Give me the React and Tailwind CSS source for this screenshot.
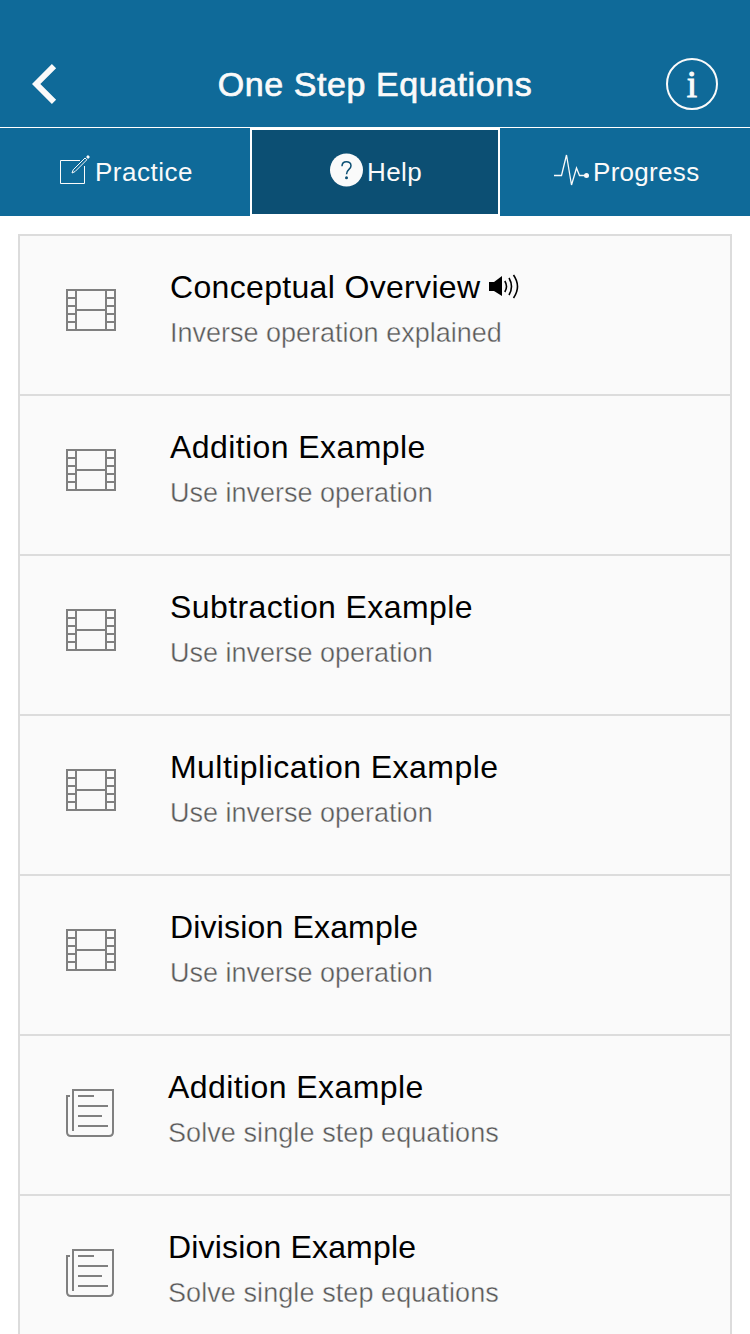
import React from 'react';

function FilmIcon() {
  return (
    <svg className="mt-[53px] ml-[46px] h-[42px] w-[50px] shrink-0" viewBox="0 0 50 42" fill="none" stroke="#808080" strokeWidth="2">
      <path d="M1 1H49V41H1ZM10 1V41M40 1V41M10 21H40M1 9H10M1 17H10M1 25H10M1 33H10M40 9H49M40 17H49M40 25H49M40 33H49" />
    </svg>
  );
}

function ArticleIcon() {
  return (
    <svg className="mt-[53px] ml-[46px] h-12 w-12 shrink-0" viewBox="0 0 48 48" fill="none" stroke="#808080" strokeWidth="2">
      <path d="M7 42V1H47V43Q47 47 43 47H5Q1 47 1 43V7H4M12 7H28M12 17H42M12 27H36M12 37H42" />
    </svg>
  );
}

function SpeakerIcon() {
  return (
    <svg className="absolute top-[38px] left-[469px] h-[26px] w-[32px]" viewBox="0 0 32 26" fill="none" stroke="#000" strokeWidth="1.6">
      <path d="M0 8H5L13 2V22L5 17H0Z" fill="#000" stroke="none" />
      <path d="M15.8 7Q19.2 12.5 15.8 18M20 4Q25 12.5 20 21M24.5 1Q32.5 12.5 24.5 24" />
    </svg>
  );
}

const items = [
  { type: 'video', title: 'Conceptual Overview', subtitle: 'Inverse operation explained', audio: true, spacing: 'tracking-[0.33px]' },
  { type: 'video', title: 'Addition Example', subtitle: 'Use inverse operation', spacing: 'tracking-[0.42px]' },
  { type: 'video', title: 'Subtraction Example', subtitle: 'Use inverse operation', spacing: 'tracking-[0.4px]' },
  { type: 'video', title: 'Multiplication Example', subtitle: 'Use inverse operation', spacing: 'tracking-[0.46px]' },
  { type: 'video', title: 'Division Example', subtitle: 'Use inverse operation', spacing: 'tracking-[0.17px]' },
  { type: 'article', title: 'Addition Example', subtitle: 'Solve single step equations', spacing: 'tracking-[0.42px]' },
  { type: 'article', title: 'Division Example', subtitle: 'Solve single step equations', spacing: 'tracking-[0.17px]' },
];

function Row({ item }) {
  return (
    <li className="relative flex h-40 shrink-0 border-b-2 border-[#dcdcdc]">
      {item.type === 'video' ? <FilmIcon /> : <ArticleIcon />}
      <div className="ml-[54px] pt-[31px] whitespace-nowrap">
        <h2 className={`text-[32px] leading-[40px] text-black ${item.spacing}`}>{item.title}</h2>
        <p className={`mt-[9px] text-[27px] leading-[34px] text-[#585858] [-webkit-text-stroke:0.4px_#fafafa] ${item.type === 'article' ? 'tracking-[0.08px]' : 'tracking-normal'}`}>{item.subtitle}</p>
      </div>
      {item.audio && <SpeakerIcon />}
    </li>
  );
}

export default function App() {
  return (
    <div className="flex h-[1334px] w-[750px] flex-col overflow-hidden bg-white font-['Liberation_Sans',Arial,sans-serif]">
      <header className="flex h-[127px] shrink-0 items-end justify-between bg-[#0f6a99] px-8 pb-[17px] text-[#fafafa]">
        <button className="mb-[5px] h-[42px] w-[52px]" aria-label="Back">
          <svg className="h-[42px] w-[26px]" viewBox="0 0 26 42" fill="none" stroke="#fafafa" strokeWidth="6">
            <path d="M22 3.2L4.2 21L22 38.8" />
          </svg>
        </button>
        <h1 className="mb-[6px] text-[34px] leading-[40px] tracking-[0.56px] whitespace-nowrap [-webkit-text-stroke:0.7px_#fafafa]">One Step Equations</h1>
        <button className="flex size-[52px] items-center justify-center rounded-full border-2 border-[#fafafa]" aria-label="Information">
          <span className="font-['Liberation_Serif',serif] text-[37px] leading-none [-webkit-text-stroke:1px_#fafafa]">i</span>
        </button>
      </header>
      <nav className="grid h-[89px] shrink-0 grid-cols-3 border-t border-white bg-[#0f6a99] text-[26px] tracking-[0.4px] text-[#fafafa]">
        <button className="flex items-center pl-[60px]">
          <svg className="mb-[4px] h-[32px] w-[31px]" viewBox="0 0 31 32" fill="none" stroke="#fafafa" strokeWidth="1">
            <path d="M20 6.5H.5V29.5H24.5V12" />
            <path d="M12 19L13.2 15.8L25 4L26.8 5.8L15 17.6Z" />
            <path d="M27 2L29 4" strokeWidth="2.6" />
          </svg>
          <span className="ml-[4px] tracking-[0.5px]">Practice</span>
        </button>
        <button className="flex items-center border-2 border-white bg-[#0c4f73] pl-[78px]">
          <svg className="mb-[4px] h-[34px] w-[34px]" viewBox="0 0 34 34">
            <circle cx="16.5" cy="17" r="16.5" fill="#fafafa" />
            <path d="M12 13.2C12 7 21 7.4 21 12.7C21 16.7 16.5 16.2 16.5 21.3" fill="none" stroke="#0c4f73" strokeWidth="1.5" />
            <circle cx="16.5" cy="24.7" r="1.5" fill="#0c4f73" />
          </svg>
          <span className="ml-[3px]">Help</span>
        </button>
        <button className="flex items-center pl-[54px]">
          <svg className="mb-[4px] h-[34px] w-[36px]" viewBox="0 0 36 34" fill="none" stroke="#fafafa" strokeWidth="1.3">
            <path d="M0 22.5H7.5L12.5 2L17.5 32L22.5 15L25.5 22.5H32" />
            <circle cx="32.5" cy="22.5" r="2.5" fill="#fafafa" stroke="none" />
          </svg>
          <span className="ml-[3px] tracking-[0.3px]">Progress</span>
        </button>
      </nav>
      <main className="mx-[18px] mt-[18px] flex min-h-0 flex-1 flex-col overflow-hidden border-x-2 border-t-2 border-[#dcdcdc] bg-[#fafafa]">
        <ul className="flex flex-col">
          {items.map((item, index) => <Row key={index} item={item} />)}
        </ul>
      </main>
    </div>
  );
}
